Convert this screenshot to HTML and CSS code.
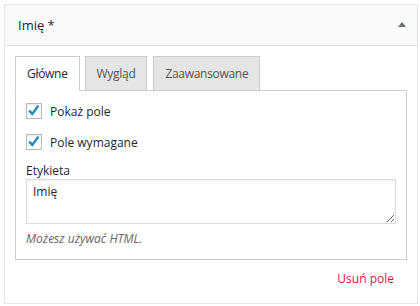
FILE: index.html
```html
<!DOCTYPE html>
<html lang="pl">
<head>
<meta charset="utf-8">
<title>Imię</title>
<link rel="stylesheet" href="styles.css">
</head>
<body>
<div class="widget">
  <div class="widget-top">
    <h3 class="widget-title">Imię *</h3>
    <span class="toggle" aria-hidden="true"></span>
  </div>
  <div class="widget-inside">
    <ul class="tabs">
      <li class="tab active">Główne</li>
      <li class="tab">Wygląd</li>
      <li class="tab">Zaawansowane</li>
    </ul>
    <div class="panel">
      <label class="check-row">
        <span class="cb"><input type="checkbox" checked><svg viewBox="0 0 16 16" width="16" height="16"><path d="M3.2 7.6 L6.3 10.9 L12.4 2.6" fill="none" stroke="#1e8cbe" stroke-width="2.4" stroke-linejoin="miter"/></svg></span>
        <span>Pokaż pole</span>
      </label>
      <label class="check-row">
        <span class="cb"><input type="checkbox" checked><svg viewBox="0 0 16 16" width="16" height="16"><path d="M3.2 7.6 L6.3 10.9 L12.4 2.6" fill="none" stroke="#1e8cbe" stroke-width="2.4" stroke-linejoin="miter"/></svg></span>
        <span>Pole wymagane</span>
      </label>
      <label class="field-label" for="etykieta">Etykieta</label>
      <textarea id="etykieta" class="field-text">Imię</textarea>
      <p class="description">Możesz używać HTML.</p>
    </div>
    <div class="actions">
      <a class="delete" href="#">Usuń pole</a>
    </div>
  </div>
</div>
</body>
</html>
```

FILE: styles.css
```css
html, body {
  margin: 0;
  padding: 0;
  background: #ffffff;
}
body {
  font-family: "Open Sans", "Noto Sans", sans-serif;
  font-size: 12px;
  color: #23282d;
}
.widget {
  box-sizing: border-box;
  width: 414px;
  height: 300px;
  margin: 4px 0 0 4px;
  border: 1px solid #e5e5e5;
  background: #fff;
}
.widget-top {
  box-sizing: border-box;
  height: 41px;
  background: #f9f9f9;
  border-bottom: 1px solid #e5e5e5;
  display: flex;
  align-items: center;
  justify-content: space-between;
  padding: 0 11px 0 13px;
}
.widget-title {
  margin: 0;
  font-size: 13px;
  font-weight: 400;
  color: #23282d;
}
.toggle {
  width: 0;
  height: 0;
  border-left: 4px solid transparent;
  border-right: 4px solid transparent;
  border-bottom: 5px solid #6a6f74;
  margin-top: -2px;
}
.widget-inside {
  padding: 10px 10px 0 10px;
}
.tabs {
  list-style: none;
  margin: 0 0 -1px 0;
  padding: 0;
  display: flex;
  position: relative;
  z-index: 1;
}
.tab {
  box-sizing: border-box;
  height: 35px;
  display: flex;
  align-items: center;
  padding: 0 11px;
  margin-right: 6px;
  background: #e5e5e5;
  border: 1px solid #ccc;
  color: #555;
  letter-spacing: -0.3px;
}
.tab.active {
  background: #fff;
  border-bottom-color: #fff;
  color: #23282d;
  margin-right: 5px;
}
.panel {
  border: 1px solid #ccc;
  padding: 12px 9px 11px 10px;
  display: flex;
  flex-direction: column;
  align-items: flex-start;
}
.check-row {
  display: flex;
  align-items: center;
  height: 16px;
  color: #23282d;
}
.check-row + .check-row {
  margin-top: 15px;
}
.cb {
  position: relative;
  width: 16px;
  height: 16px;
  margin-right: 8px;
}
.cb input {
  appearance: none;
  -webkit-appearance: none;
  box-sizing: border-box;
  margin: 0;
  width: 16px;
  height: 16px;
  border: 1px solid #b4b9be;
  background: #fff;
  box-shadow: inset 0 1px 2px rgba(0,0,0,0.1);
  display: block;
}
.cb svg {
  position: absolute;
  left: 0;
  top: 0;
  pointer-events: none;
}
.field-label {
  display: block;
  margin-top: 12px;
  line-height: 17px;
  color: #23282d;
}
.field-text {
  box-sizing: border-box;
  width: 370px;
  height: 45px;
  margin: 0;
  padding: 3px 6px;
  border: 1px solid #ddd;
  box-shadow: inset 0 1px 2px rgba(0,0,0,0.07);
  font-family: "Open Sans", "Noto Sans", sans-serif;
  font-size: 12px;
  line-height: 18px;
  color: #23282d;
}
.description {
  margin: 6px 0 0 0;
  font-style: italic;
  color: #666;
  line-height: 18px;
}
.actions {
  text-align: right;
  padding: 10px 13px 0 0;
  line-height: 18px;
}
.delete {
  color: #f00f3c;
  text-decoration: none;
}
```
